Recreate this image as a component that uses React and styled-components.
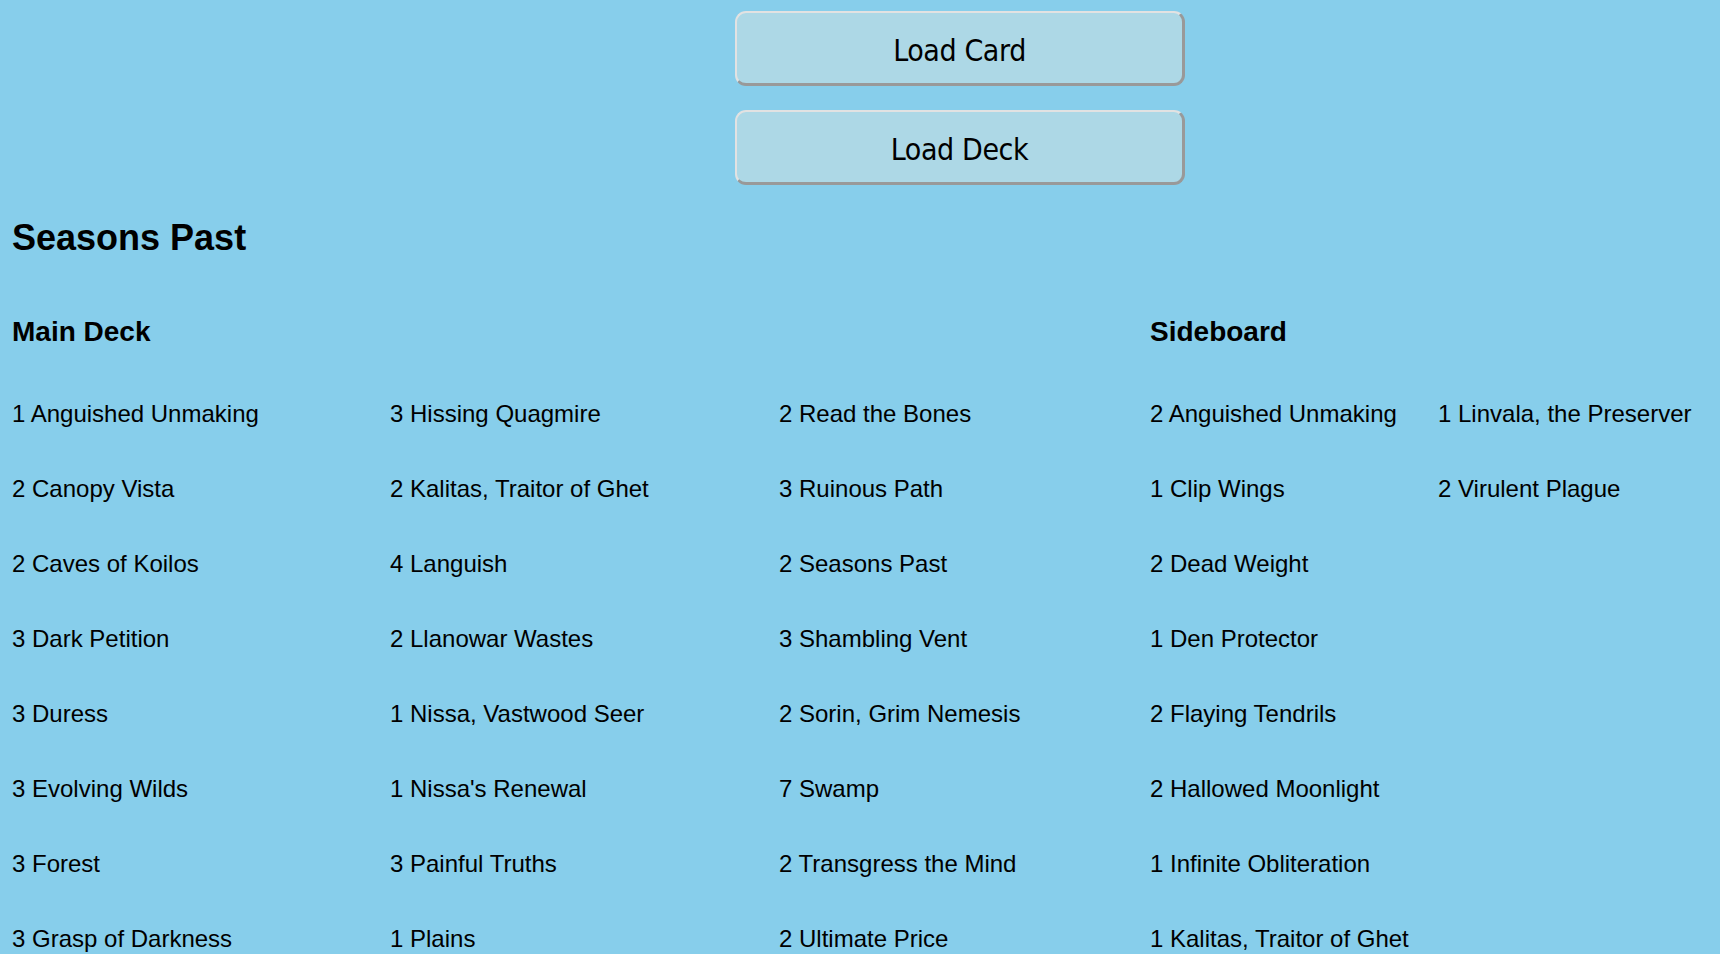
import React from 'react'
import styled, { createGlobalStyle } from 'styled-components'

const GlobalStyle = createGlobalStyle`
  html, body {
    margin: 0;
    padding: 0;
    background: #87ceeb;
  }
  body {
    font-family: "Liberation Sans", Arial, sans-serif;
    color: #000;
  }
`

const mainDeck = [
  ["1 Anguished Unmaking", "2 Canopy Vista", "2 Caves of Koilos", "3 Dark Petition", "3 Duress", "3 Evolving Wilds", "3 Forest", "3 Grasp of Darkness"],
  ["3 Hissing Quagmire", "2 Kalitas, Traitor of Ghet", "4 Languish", "2 Llanowar Wastes", "1 Nissa, Vastwood Seer", "1 Nissa's Renewal", "3 Painful Truths", "1 Plains"],
  ["2 Read the Bones", "3 Ruinous Path", "2 Seasons Past", "3 Shambling Vent", "2 Sorin, Grim Nemesis", "7 Swamp", "2 Transgress the Mind", "2 Ultimate Price"],
]

const sideboard = [
  ["2 Anguished Unmaking", "1 Clip Wings", "2 Dead Weight", "1 Den Protector", "2 Flaying Tendrils", "2 Hallowed Moonlight", "1 Infinite Obliteration", "1 Kalitas, Traitor of Ghet"],
  ["1 Linvala, the Preserver", "2 Virulent Plague"],
]

const Page = styled.div`
  padding: 11px 0 0 12px;
`

const Actions = styled.div`
  display: flex;
  flex-direction: column;
  align-items: center;
  gap: 24px;
  margin-left: -12px;
  padding-left: 200px;
`

const LoadButton = styled.button`
  width: 450px;
  height: 75px;
  box-sizing: border-box;
  background: #add8e6;
  border: 2px solid;
  border-width: 2px 3px 3px 2px;
  border-color: #e2e2e2 #999 #999 #e2e2e2;
  border-radius: 11px;
  font-family: Tahoma, "DejaVu Sans Condensed", "DejaVu Sans", sans-serif;
  font-size: 30px;
  letter-spacing: -0.4px;
  color: #000;
  padding: 5px 0 0;
  cursor: pointer;
`

const Title = styled.h1`
  margin: 32px 0 0;
  font-size: 36px;
  line-height: 1.15;
  font-weight: bold;
`

const Decks = styled.div`
  display: flex;
  margin-top: 58px;
`

const Section = styled.section`
  display: grid;
  grid-template-columns: ${p => p.$cols};
  align-content: start;
`

const Heading = styled.h2`
  grid-column: 1 / -1;
  margin: 0 0 28px;
  font-size: 28px;
  line-height: 1.15;
  font-weight: bold;
`

const Column = styled.ul`
  list-style: none;
  margin: 0;
  padding: 0;
`

const Card = styled.li`
  height: 75px;
  display: flex;
  align-items: center;
  font-size: 24px;
  line-height: 1.15;
  white-space: nowrap;
`

const DeckSection = ({ title, columns, cols }) => (
  <Section $cols={cols}>
    <Heading>{title}</Heading>
    {columns.map((col, i) => (
      <Column key={i}>
        {col.map(card => <Card key={card}>{card}</Card>)}
      </Column>
    ))}
  </Section>
)

export default function App() {
  return (
    <>
      <GlobalStyle />
      <Page>
        <Actions>
          <LoadButton>Load Card</LoadButton>
          <LoadButton>Load Deck</LoadButton>
        </Actions>
        <Title>Seasons Past</Title>
        <Decks>
          <DeckSection title="Main Deck" columns={mainDeck} cols="378px 389px 371px" />
          <DeckSection title="Sideboard" columns={sideboard} cols="288px auto" />
        </Decks>
      </Page>
    </>
  )
}
